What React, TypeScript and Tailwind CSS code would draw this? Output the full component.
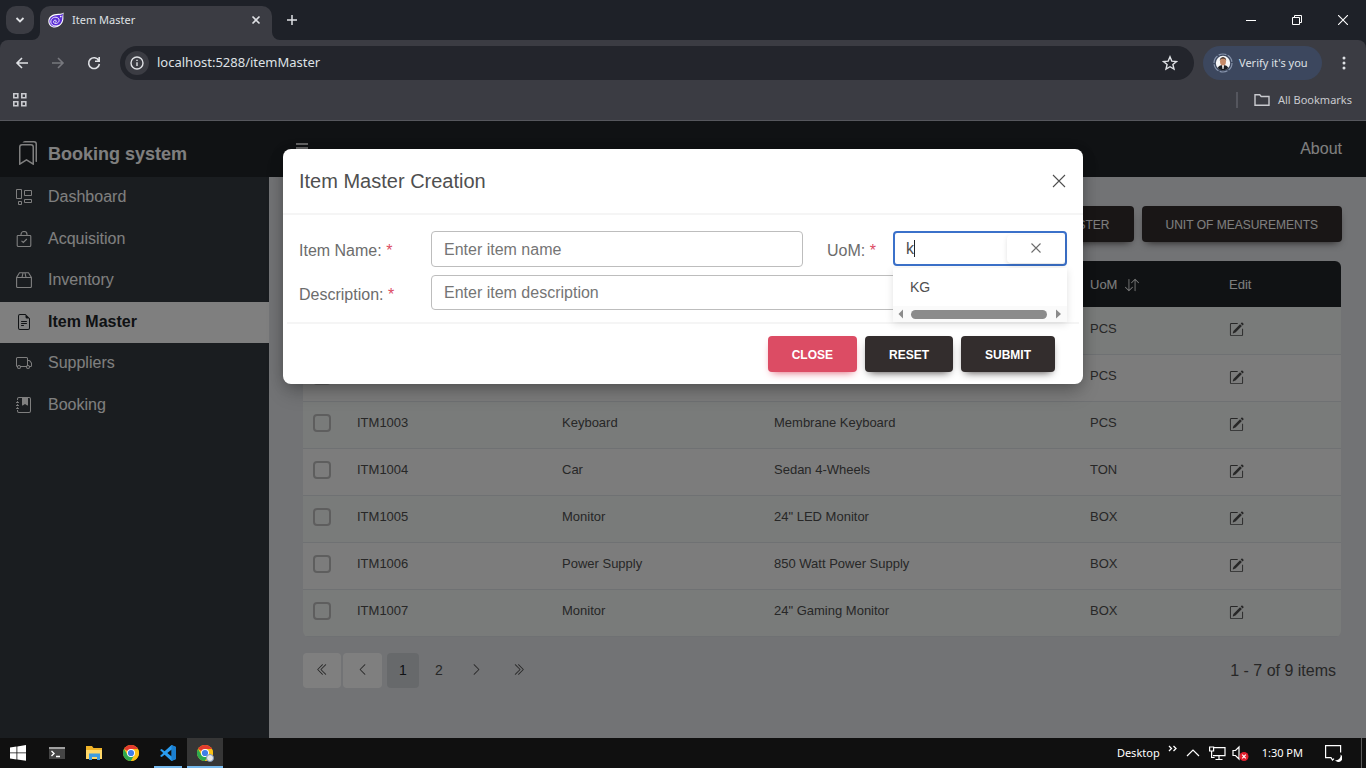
import type { ReactNode } from "react";
import {
  BsArrowDownUp,
  BsBookmarks,
  BsChevronDoubleLeft,
  BsChevronDoubleRight,
  BsChevronLeft,
  BsChevronRight,
  BsFileEarmarkText,
  BsJournalBookmarkFill,
  BsPencilSquare,
  BsTruck,
} from "react-icons/bs";

const CHROME_FONT = "font-['Noto_Sans','Open_Sans',sans-serif]";

function Line({ d, size = 16, w = 1.5, className = "" }: { d: string; size?: number; w?: number; className?: string }) {
  return (
    <svg width={size} height={size} viewBox={`0 0 ${size} ${size}`} fill="none" stroke="currentColor" strokeWidth={w} className={className} aria-hidden="true">
      <path d={d} />
    </svg>
  );
}

function BlazorLogo() {
  return (
    <svg width="16" height="16" viewBox="0 0 16 16" aria-hidden="true">
      <path d="M15.8.4c-1.5 1-3.2 1.4-5.2 1.4C4.5 1.8.3 4.5.3 9.2c0 3.7 2.7 6.3 6.4 6.3 4.500 0 8.200-3.500 8.700-8.400.2-2.300-.5-4.200.4-6.700z" fill="#fff" />
      <path d="M15.200 1.700c-1.400.8-3 1.200-4.800 1.200-5.200.2-9 2.300-9 6.300 0 3.100 2.300 5.300 5.300 5.300 4 0 7.100-3.300 7.600-7.500.2-2-.1-3.300.9-5.300z" fill="#5a2dd6" />
      <path d="M11.300 13.200c-6.800 2.700-9.800-2.500-8-5.600 2-3.600 7.900-3 7.800.8-.1 3-4.300 4-5.400 2.100-.9-1.900 1.900-3.300 2.600-1.600.4 1-.6 1.500-1.200 1" stroke="#fff" strokeWidth=".9" fill="none" />
      <circle cx="12.800" cy="4.600" r=".8" fill="#fff" />
    </svg>
  );
}

function ChromeLogo() {
  return (
    <svg width="16" height="16" viewBox="0 0 16 16" aria-hidden="true">
      <circle cx="8" cy="8" r="8" fill="#fbc116" />
      <path d="M8 8 1.070 4A8 8 0 0 1 14.930 4z" fill="#e33b2e" />
      <path d="M8 8 4.500 10 1.070 4A8 8 0 0 0 8 16l3.460-6z" fill="#2da94f" />
      <path d="M8 4h6.930A8 8 0 0 1 8 16l3.460-6z" fill="#fbc116" />
      <circle cx="8" cy="8" r="4" fill="#fff" />
      <circle cx="8" cy="8" r="3.100" fill="#3f7ee8" />
    </svg>
  );
}

function BrowserChrome() {
  return (
    <header className={`${CHROME_FONT} bg-[#1e2128] text-[11px] text-[#dfe1e5]`}>
      <div className="flex h-10 items-center pl-[6px]">
        <button aria-label="Search tabs" className="flex size-7 items-center justify-center rounded-[10px] bg-[#3b3c43]">
          <Line size={10} w={1.8} d="M1.500 3 5 6.500 8.500 3" />
        </button>
        <div className="relative ml-[6px] mt-[6px] flex h-[34px] w-[232px] items-center rounded-t-[10px] bg-[#3b3c43] pr-[10px] pb-[6px] pl-2">
          <BlazorLogo />
          <span className="ml-2 flex-1">Item Master</span>
          <button aria-label="Close tab" className="flex size-3 items-center justify-center">
            <Line size={10} w={1.6} d="M1.500 1.500l7 7M8.500 1.500l-7 7" />
          </button>
          <svg className="absolute -left-2 bottom-0 fill-[#3b3c43]" width="8" height="8" aria-hidden="true"><path d="M8 0v8H0a8 8 0 0 0 8-8z" /></svg>
          <svg className="absolute -right-2 bottom-0 fill-[#3b3c43]" width="8" height="8" aria-hidden="true"><path d="M0 0v8h8a8 8 0 0 1-8-8z" /></svg>
        </div>
        <button aria-label="New tab" className="ml-[14px]">
          <Line size={12} w={1.5} d="M6 1v10M1 6h10" />
        </button>
        <div className="ml-auto flex text-white">
          <button aria-label="Minimize" className="flex h-10 w-[46px] items-center justify-center"><Line size={10} w={1} d="M0 5.500h10" /></button>
          <button aria-label="Restore" className="flex h-10 w-[46px] items-center justify-center"><Line size={10} w={1} d="M.5 2.500h7v7h-7zM2.500 2.500v-2h7v7h-2" /></button>
          <button aria-label="Close" className="flex h-10 w-[46px] items-center justify-center"><Line size={10} w={1.1} d="M0 0l10 10M10 0 0 10" /></button>
        </div>
      </div>
      <div className="rounded-t-lg border-b border-[#56575d] bg-[#3b3c43]">
        <div className="flex h-10 items-center px-[14px] pt-[6px]">
          <button aria-label="Back"><Line w={1.6} d="M14 8H3M8 3 3 8l5 5" /></button>
          <button aria-label="Forward" className="ml-5 text-[#77787e]"><Line w={1.6} d="M2 8h11M8 3l5 5-5 5" /></button>
          <button aria-label="Reload" className="ml-5"><Line w={1.6} d="M12.800 5.500A5.400 5.400 0 1 0 13.400 9M13.200 2v4.200H9" /></button>
          <div className="mr-[9px] ml-[18px] flex h-[34px] flex-1 items-center rounded-full bg-[#23252c] pr-4 pl-[5px]">
            <span className="flex size-6 items-center justify-center rounded-full bg-[#3b3c43]">
              <svg width="14" height="14" viewBox="0 0 14 14" fill="none" stroke="currentColor" strokeWidth="1.4" aria-hidden="true">
                <circle cx="7" cy="7" r="6" /><path d="M7 6.200V10M7 3.800v1.300" />
              </svg>
            </span>
            <input aria-label="Address" className="ml-2 min-w-0 flex-1 bg-transparent text-[13px] outline-none" defaultValue="localhost:5288/itemMaster" />
            <button aria-label="Bookmark this page"><Line w={1.4} d="M8 1.800l1.800 4.300 4.700.4-3.600 3 1.100 4.600L8 11.700l-4 2.400 1.100-4.600-3.600-3 4.700-.4z" /></button>
          </div>
          <button className="flex h-[34px] w-[119px] items-center rounded-full bg-[#3c475e] pl-[10px] whitespace-nowrap">
            <svg width="20" height="20" viewBox="0 0 20 20" aria-hidden="true" className="mr-[6px] shrink-0">
              <circle cx="10" cy="10" r="9" fill="none" stroke="#8895ad" strokeWidth="1.2" strokeDasharray="8 1.4" />
              <circle cx="10" cy="10" r="7.200" fill="#f5f5f5" />
              <path d="M4.800 15c.5-2 2.500-3 5.200-3s4.700 1 5.200 3A7.200 7.200 0 0 1 4.800 15z" fill="#1b1d22" />
              <path d="M9 12h2l-.5 4h-1z" fill="#fff" />
              <ellipse cx="10" cy="8.500" rx="3" ry="4" fill="#c58a68" />
              <path d="M6.800 8c-.4-5 6.800-5 6.400 0-.7-2-1-2.500-3.200-2.500S7.400 6 6.800 8z" fill="#1b1413" />
            </svg>
            Verify it's you
          </button>
          <button aria-label="Menu" className="ml-[14px]">
            <svg width="16" height="16" fill="currentColor" aria-hidden="true"><circle cx="8" cy="3" r="1.500" /><circle cx="8" cy="8" r="1.500" /><circle cx="8" cy="13" r="1.500" /></svg>
          </button>
        </div>
        <div className="flex h-10 items-center pr-[14px] pl-3 text-[#c9cacf]">
          <button aria-label="Apps"><Line w={1.6} d="M1.800 1.800h4v4h-4zM9.800 1.800h4v4h-4zM1.800 9.800h4v4h-4zM9.800 9.800h4v4h-4z" /></button>
          <span className="ml-auto h-4 w-[2px] bg-[#55565e]" />
          <button className="ml-4 flex items-center">
            <Line w={1.4} className="mr-2" d="M1 2.700h4.700L7.200 4.500H15v8.800H1z" />
            All Bookmarks
          </button>
        </div>
      </div>
    </header>
  );
}

const NAV: { label: string; icon: ReactNode; active?: boolean }[] = [
  { label: "Dashboard", icon: <Line w={1} d="M.5.5h5v9h-5zM8.500 1.500h7v5h-7zM2.500 12.500h3v3h-3zM8.500 10.500h7v3h-7z" /> },
  { label: "Acquisition", icon: <Line w={1.1} d="M2 4.500h12q.8 0 .8.800v9q0 1.200-1.200 1.200H2.400q-1.200 0-1.200-1.200v-9q0-.8.8-.8zM5 4.500V3.500a3 3 0 0 1 6 0v1M5.500 9.800 7.300 11.500 10.800 8" /> },
  { label: "Inventory", icon: <Line w={1.1} d="M.6 5.500v9q0 1 1 1h12.800q1 0 1-1v-9L12.500.8h-9zM.6 5.500h14.800M6 5.300 7 1M10 5.300 9 1" /> },
  { label: "Item Master", icon: <BsFileEarmarkText size={16} />, active: true },
  { label: "Suppliers", icon: <BsTruck size={16} /> },
  { label: "Booking", icon: <BsJournalBookmarkFill size={16} /> },
];

const ITEMS = [
  ["ITM1001", "Mouse", "Wireless Mouse", "PCS"],
  ["ITM1002", "Headset", "Wired Headset", "PCS"],
  ["ITM1003", "Keyboard", "Membrane Keyboard", "PCS"],
  ["ITM1004", "Car", "Sedan 4-Wheels", "TON"],
  ["ITM1005", "Monitor", '24" LED Monitor', "BOX"],
  ["ITM1006", "Power Supply", "850 Watt Power Supply", "BOX"],
  ["ITM1007", "Monitor", '24" Gaming Monitor', "BOX"],
];

const BUTTON = "h-9 rounded px-6 pt-px text-xs text-white uppercase";
const DARK = "bg-[#332d2d] shadow-[0_4px_9px_-4px_#332d2d]";
const FIELD = "w-full rounded border border-[#bdbdbd] px-3 text-base text-[#4f4f4f] outline-none placeholder:text-[#757575]";

function Sidebar() {
  return (
    <aside className="flex w-[269px] shrink-0 flex-col bg-[#343a40]">
      <div className="flex h-14 items-center bg-[#212529] pt-2 pl-4 text-white">
        <BsBookmarks size={24} />
        <span className="ml-2 pt-px text-lg font-bold">Booking system</span>
      </div>
      <nav>
        {NAV.map((n) => (
          <a key={n.label} href={`#${n.label}`} className={n.active ? "flex h-[41px] items-center bg-white pb-px pl-4 font-bold text-[#212529]" : "flex h-[42px] items-center pb-[2px] pl-4 text-white even:h-[41px]"}>
            {n.icon}
            <span className="ml-4">{n.label}</span>
          </a>
        ))}
      </nav>
    </aside>
  );
}

function ItemTable() {
  return (
    <div className="mr-px overflow-hidden rounded-md">
      <table className="w-full table-fixed border-collapse text-left text-[13px] text-[#4f4f4f]">
        <colgroup>
          <col className="w-[38px]" />
          <col className="w-[205px]" />
          <col className="w-[212px]" />
          <col className="w-[316px]" />
          <col className="w-[139px]" />
          <col />
        </colgroup>
        <thead className="bg-[#212529] text-[#fbfbfb]">
          <tr className="h-[46px]">
            <th />
            <th className="px-4 pt-[2px] font-medium">Item Code</th>
            <th className="px-4 pt-[2px] font-medium">Item Name</th>
            <th className="px-4 pt-[2px] font-medium">Description</th>
            <th className="px-4 pt-[2px] font-medium">
              <span className="flex items-center gap-2">UoM <BsArrowDownUp size={14} /></span>
            </th>
            <th className="px-4 pt-[2px] font-medium">Edit</th>
          </tr>
        </thead>
        <tbody>
          {ITEMS.map(([code, name, description, uom]) => (
            <tr key={code} className="h-[47px] border-b border-[#dee2e6] odd:bg-[#f2f6f4] even:bg-[#f8f8f8]">
              <td className="pb-[3px] pl-[10px]">
                <input type="checkbox" aria-label={`Select ${code}`} className="block size-[18px] appearance-none rounded border-2 border-[#bdbdbd]" />
              </td>
              <td className="px-4 pb-[3px]">{code}</td>
              <td className="px-4 pb-[3px]">{name}</td>
              <td className="px-4 pb-[3px]">{description}</td>
              <td className="px-4 pb-[3px]">{uom}</td>
              <td className="px-4 pb-px"><button aria-label={`Edit ${code}`} className="block"><BsPencilSquare size={15} /></button></td>
            </tr>
          ))}
        </tbody>
      </table>
    </div>
  );
}

function Pagination() {
  return (
    <div className="mt-4 flex items-center text-[#4f4f4f]">
      <button aria-label="First page" className="flex h-[35px] w-[38px] items-center justify-center rounded bg-white pb-[2px]"><BsChevronDoubleLeft size={13} /></button>
      <button aria-label="Previous page" className="ml-[2px] flex h-[35px] w-[39px] items-center justify-center rounded bg-white pb-[2px]"><BsChevronLeft size={13} /></button>
      <button className="ml-[5px] h-[35px] w-8 rounded bg-[#cfd3d7] text-sm text-[#212529]">1</button>
      <button className="ml-1 h-[35px] w-8 text-sm">2</button>
      <button aria-label="Next page" className="ml-[2px] flex h-[35px] w-[39px] items-center justify-center pb-[2px]"><BsChevronRight size={13} /></button>
      <button aria-label="Last page" className="ml-[2px] flex h-[35px] w-10 items-center justify-center pb-[2px]"><BsChevronDoubleRight size={13} /></button>
      <span className="ml-auto pt-[2px] pr-[6px]">1 - 7 of 9 items</span>
    </div>
  );
}

function Star() {
  return <span className="text-[#dc4c64]">*</span>;
}

function ItemDialog() {
  return (
    <section role="dialog" aria-label="Item Master Creation" className="mx-auto mt-7 w-full max-w-[800px] rounded-lg bg-white text-[#6c6c6c] shadow-[0_2px_15px_-3px_rgba(0,0,0,.3),0_10px_20px_-2px_rgba(0,0,0,.2)]">
      <div className="flex h-[66px] items-center justify-between border-b-2 border-[#f5f5f5] px-4 pb-px">
        <h5 className="text-xl text-[#4f4f4f]">Item Master Creation</h5>
        <button aria-label="Close dialog" className="mr-px text-[#4f4f4f]"><Line size={14} w={1.1} d="M1 1l12 12M13 1 1 13" /></button>
      </div>
      <form className="px-4 pt-4 pb-3">
        <div className="flex items-start">
          <label htmlFor="name" className="w-[132px] shrink-0 pt-2">Item Name: <Star /></label>
          <input id="name" placeholder="Enter item name" className={`${FIELD} h-9 flex-1 pt-px`} />
          <label htmlFor="uom" className="ml-6 w-[66px] shrink-0 pt-2">UoM: <Star /></label>
          <div className="relative w-[174px]">
            <input id="uom" defaultValue="k" className="block h-[35px] w-full rounded border-2 border-[#3b71ca] px-[11px] text-base text-[#4f4f4f] outline-none" />
            <span className="absolute top-[9px] left-[21px] h-[17px] w-px bg-[#212529]" />
            <button type="button" aria-label="Clear unit" className="absolute top-[4px] right-[2px] flex h-7 w-[58px] items-center justify-center rounded bg-white pb-[2px] text-[#6c6c6c] shadow-[0_2px_5px_rgba(0,0,0,.12)]">
              <Line size={10} w={1.1} d="M.5.5l9 9M9.500.5l-9 9" />
            </button>
            <ul role="listbox" aria-label="Units" className="absolute inset-x-0 top-[37px] z-10 bg-white text-sm text-[#4f4f4f] shadow-[0_2px_8px_rgba(0,0,0,.12)]">
              <li role="option" aria-selected="false" className="flex h-[38px] items-center pl-[17px]">KG</li>
              <li aria-hidden="true" className="flex h-4 items-center justify-between bg-[#fafafa] px-[5px]">
                <svg width="6" height="10" fill="#8b8b8b"><path d="M5 .5v9L.5 5z" /></svg>
                <span className="mx-[7px] h-[9px] flex-1 rounded-full bg-[#8b8b8b]" />
                <svg width="8" height="10" fill="#8b8b8b"><path d="M2 .5v9L7 5z" /></svg>
              </li>
            </ul>
          </div>
        </div>
        <div className="mt-2 flex items-start">
          <label htmlFor="description" className="w-[132px] shrink-0 pt-2">Description: <Star /></label>
          <input id="description" placeholder="Enter item description" className={`${FIELD} h-[35px]`} />
        </div>
      </form>
      <div className="mx-1 flex justify-end gap-2 border-t-2 border-[#f5f5f5] pt-3 pr-6 pb-3 font-bold">
        <button className={`${BUTTON} bg-[#dc4c64] shadow-[0_4px_9px_-4px_#dc4c64]`}>Close</button>
        <button className={`${BUTTON} ${DARK}`}>Reset</button>
        <button className={`${BUTTON} ${DARK}`}>Submit</button>
      </div>
    </section>
  );
}

function WindowsTaskbar() {
  return (
    <footer className={`${CHROME_FONT} flex h-[30px] items-center bg-[#101010] text-[11px] text-white`}>
      <button aria-label="Start" className="ml-[10px]">
        <svg width="16" height="16" fill="#fff" aria-hidden="true"><path d="M0 2.400 6.500 1.500v6H0zM7.300 1.400 16 .1v7.400H7.300zM0 8.300h6.500v6.100L0 13.500zM7.300 8.300H16v7.500l-8.700-1.200z" /></svg>
      </button>
      <button aria-label="Terminal" className="ml-[23px]">
        <svg width="16" height="14" aria-hidden="true"><rect y="1" width="16" height="12" fill="#454545" /><rect y="1" width="16" height="2" fill="#a0a0a0" /><path d="M2.500 5 5 7.500 2.500 10M7 10.500h4" stroke="#fff" strokeWidth="1.4" fill="none" /></svg>
      </button>
      <button aria-label="File Explorer" className="ml-[21px]">
        <svg width="17" height="16" aria-hidden="true"><path d="M0 1h6l1.500 2H16v11H0z" fill="#f0b429" /><path d="M0 5h16v9H0z" fill="#ffd869" /><path d="M3 15V8.500h11V15h-3v-3H6v3z" fill="#3f9ce0" /></svg>
      </button>
      <button aria-label="Chrome" className="ml-5"><ChromeLogo /></button>
      <button aria-label="Visual Studio Code" className="ml-[15px] flex h-full w-7 items-center justify-center border-b-2 border-[#76b9ed] pt-[2px]">
        <svg width="16" height="16" viewBox="0 0 16 16" aria-hidden="true"><path d="M11.500 0 16 2v12l-4.500 2L4.600 9.700 1.700 12 0 11.100 3.200 8 0 4.900 1.700 4l2.900 2.300zM11.700 4.600 7.300 8l4.400 3.400z" fill="#2a9df0" /><path d="M11.500 0 16 2v12l-4.500 2z" fill="#1b7fd0" /></svg>
      </button>
      <button aria-label="Chrome window" className="relative ml-[5px] flex h-full w-9 items-center justify-center border-b-2 border-[#76b9ed] bg-[#363636] pt-[2px]">
        <ChromeLogo />
        <span className="absolute right-[9px] bottom-[4px] size-2 rounded-full border border-[#7b93b5] bg-[#e8e8e8]" />
      </button>
      <div className="ml-auto flex h-full items-center">
        <span>Desktop</span>
        <Line size={10} w={1.3} className="mb-2 ml-2" d="M1 2l2.500 2.500L1 7M5.500 2 8 4.500 5.500 7" />
        <Line size={14} w={1.2} className="ml-2" d="M1 10l6-6 6 6" />
        <Line size={18} w={1.2} className="ml-2" d="M5 3.600h12v8H5M11 11.600v4M7.500 15.500h7M1.600 3h4v4h-4zM3.600 7v6.500h3" />
        <svg width="18" height="16" className="ml-[6px]" aria-hidden="true">
          <path d="M1 5.500h2.500L7 2v12l-3.500-3.500H1z" stroke="#fff" strokeWidth="1.2" fill="none" />
          <circle cx="12" cy="11.500" r="4.500" fill="#e01f2d" /><path d="M10.200 9.700l3.600 3.600M13.800 9.700l-3.600 3.600" stroke="#fff" strokeWidth="1.2" />
        </svg>
        <span className="ml-3">1:30 PM</span>
        <svg width="18" height="18" className="ml-[21px]" fill="none" stroke="#fff" strokeWidth="1.2" aria-hidden="true">
          <path d="M10 14.600 8.500 16 7 13.600H1.600v-12h15v7" /><path d="M16.500 10.500a4 4 0 1 1-5.500 5.500 4.500 4.500 0 0 0 5.500-5.500z" fill="#fff" stroke="none" />
        </svg>
        <span className="ml-[19px] h-full w-px bg-[#5a5a5a]" />
        <span className="w-1" />
      </div>
    </footer>
  );
}

export default function App() {
  return (
    <div className="flex min-h-screen flex-col font-['Liberation_Sans',Arial,sans-serif] text-base">
      <BrowserChrome />
      <div className="relative flex flex-1">
        <Sidebar />
        <main className="flex min-w-0 flex-1 flex-col bg-[#e4e6ea]">
          <div className="flex h-14 items-center justify-between bg-[#212529] pr-6 pl-[26px] text-white">
            <button aria-label="Toggle sidebar"><Line size={14} w={1.6} d="M1 2h12M1 6h12M1 10h12" /></button>
            <a href="#about">About</a>
          </div>
          <div className="pt-[29px] pr-6 pl-[34px]">
            <div className="mb-[19px] flex justify-end gap-2">
              <button className={`${BUTTON} ${DARK}`}>Item Master</button>
              <button className={`${BUTTON} ${DARK}`}>Unit of Measurements</button>
            </div>
            <ItemTable />
            <Pagination />
          </div>
        </main>
        <div className="absolute inset-0 bg-black/50">
          <ItemDialog />
        </div>
      </div>
      <WindowsTaskbar />
    </div>
  );
}
